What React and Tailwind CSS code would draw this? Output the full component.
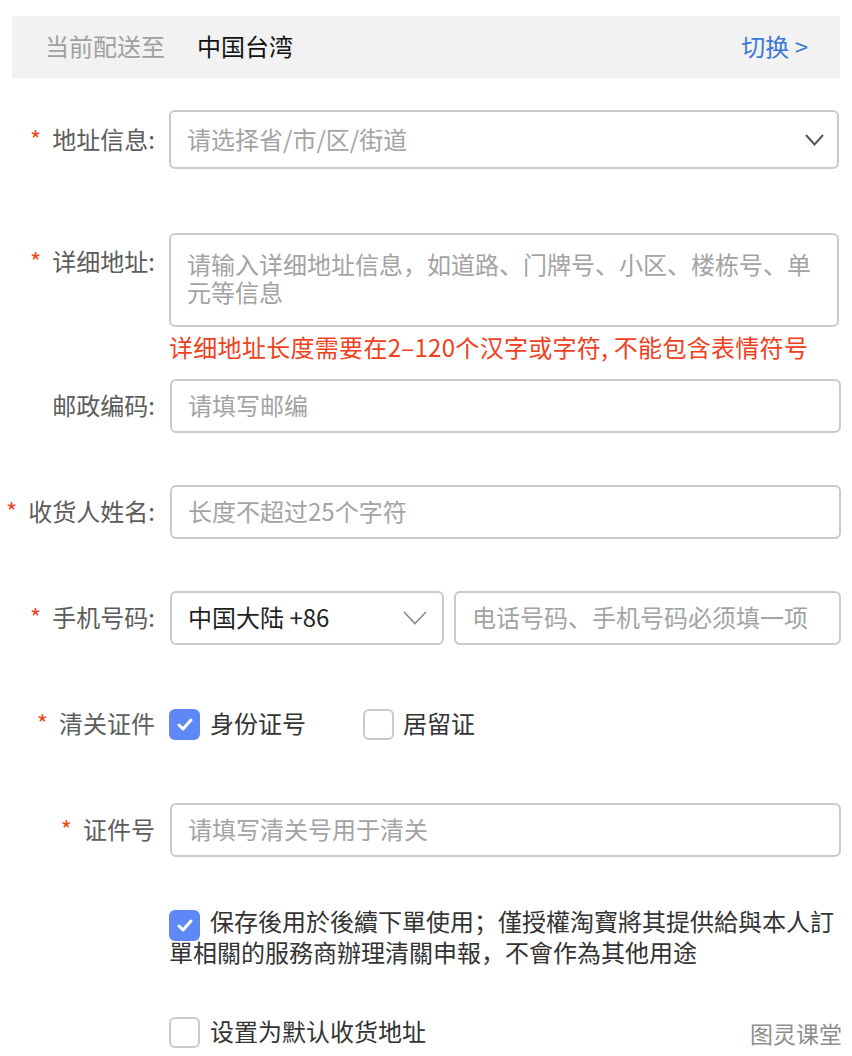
import React from 'react';

const Star = () => <span className="text-[#f2451c] mr-[11px]">*</span>;

const Chevron = ({ className, w = 19, h = 12, stroke = '#555', sw = 2 }) => (
  <svg width={w} height={h} viewBox={`0 0 ${w} ${h}`} className={className}>
    <path d={`M1 1 L${w / 2} ${h - 1.5} L${w - 1} 1`} fill="none" stroke={stroke} strokeWidth={sw} />
  </svg>
);

const Checkbox = ({ checked, className = '' }) =>
  checked ? (
    <span className={`inline-flex w-[31px] h-[31px] rounded-[6px] bg-[#5e88f6] items-center justify-center ${className}`}>
      <svg width="16" height="13" viewBox="0 0 16 13">
        <path d="M2 7 L6 11 L14 2" fill="none" stroke="#fff" strokeWidth="3" strokeLinecap="round" strokeLinejoin="round" />
      </svg>
    </span>
  ) : (
    <span className={`inline-block w-[31px] h-[31px] rounded-[6px] border-2 border-[#c9cacd] bg-white ${className}`} />
  );

const Label = ({ required, children, className = '' }) => (
  <div className={`w-[155px] shrink-0 text-right text-[#5c5c5c] leading-[28px] pb-[2px] ${className}`}>
    {required && <Star />}
    {children}
  </div>
);

const Input = ({ placeholder, className = '' }) => (
  <div className={`flex-1 h-[54px] border-2 border-[#c9cacd] rounded-[6px] flex items-center pl-[16px] pb-[2px] text-[#a3a3a3] ${className}`}>
    {placeholder}
  </div>
);

export default function App() {
  return (
    <div
      className="relative w-[852px] h-[1056px] bg-white text-[24px] overflow-hidden"
      style={{ fontFamily: '"Noto Sans CJK SC", "Noto Sans", sans-serif' }}
    >
      <div className="mx-[12px] mt-[16px] h-[62px] bg-[#f2f2f2] flex items-center pl-[33px] pr-[32px] pb-[2px]">
        <span className="text-[#a0a0a0]">当前配送至</span>
        <span className="ml-[32px] text-[#111]">中国台湾</span>
        <span className="ml-auto text-[#3b78d8]">切换 &gt;</span>
      </div>

      <div className="flex items-center mt-[32px] pr-[13px]">
        <Label required>地址信息:</Label>
        <div className="ml-[14px] flex-1 h-[59px] border-2 border-[#c9cacd] rounded-[6px] flex items-center pl-[16px] pr-[13px] pb-[2px] text-[#a3a3a3]">
          请选择省/市/区/街道
          <Chevron className="ml-auto mt-[2px]" />
        </div>
      </div>

      <div className="flex items-start mt-[64px] pr-[13px]">
        <Label required className="pt-[14px]">详细地址:</Label>
        <div className="ml-[14px] flex-1 h-[94px] border-2 border-[#c9cacd] rounded-[6px] pl-[16px] pr-[20px] pt-[15px] text-[#a3a3a3] leading-[28px]">
          请输入详细地址信息，如道路、门牌号、小区、楼栋号、单元等信息
        </div>
      </div>
      <div className="ml-[169px] mt-[6px] leading-[28px] text-[#f0401c] tracking-[0.3px]">
        详细地址长度需要在2–120个汉字或字符, 不能包含表情符号
      </div>

      <div className="flex items-center mt-[18px] pr-[11px]">
        <Label>邮政编码:</Label>
        <Input className="ml-[15px]" placeholder="请填写邮编" />
      </div>

      <div className="flex items-center mt-[52px] pr-[11px]">
        <Label required>收货人姓名:</Label>
        <Input className="ml-[15px]" placeholder="长度不超过25个字符" />
      </div>

      <div className="flex items-center mt-[52px] pr-[11px]">
        <Label required>手机号码:</Label>
        <div className="ml-[15px] w-[274px] h-[54px] border-2 border-[#c9cacd] rounded-[6px] flex items-center pl-[16px] pr-[15px] pb-[2px] text-[#1f1f1f]">
          中国大陆 +86
          <Chevron className="ml-auto mt-[2px]" w={24} h={14} stroke="#8a8a8a" sw={1.6} />
        </div>
        <Input className="ml-[10px]" placeholder="电话号码、手机号码必须填一项" />
      </div>

      <div className="flex items-center mt-[63px] h-[32px]">
        <Label required>清关证件</Label>
        <div className="ml-[14px] flex items-center">
          <Checkbox checked />
          <span className="ml-[10px] pb-[2px] text-[#333]">身份证号</span>
          <Checkbox className="ml-[57px]" />
          <span className="ml-[9px] pb-[2px] text-[#333]">居留证</span>
        </div>
      </div>

      <div className="flex items-center mt-[63px] pr-[11px]">
        <Label required>证件号</Label>
        <Input className="ml-[15px]" placeholder="请填写清关号用于清关" />
      </div>

      <p className="ml-[169px] mr-[10px] mt-[50px] leading-[28px] text-[#333]">
        <Checkbox checked className="align-middle -my-[2px] mr-[10px] relative top-[1px]" />
        保存後用於後續下單使用；僅授權淘寶將其提供給與本人訂單相關的服務商辦理清關申報，不會作為其他用途
      </p>

      <div className="flex items-center ml-[169px] mt-[51px] h-[31px]">
        <Checkbox />
        <span className="ml-[10px] pb-[2px] text-[#333]">设置为默认收货地址</span>
      </div>

      <div className="absolute right-[10px] bottom-[9px] text-[23px] text-[#8e8e8e] leading-[28px]">图灵课堂</div>
    </div>
  );
}
